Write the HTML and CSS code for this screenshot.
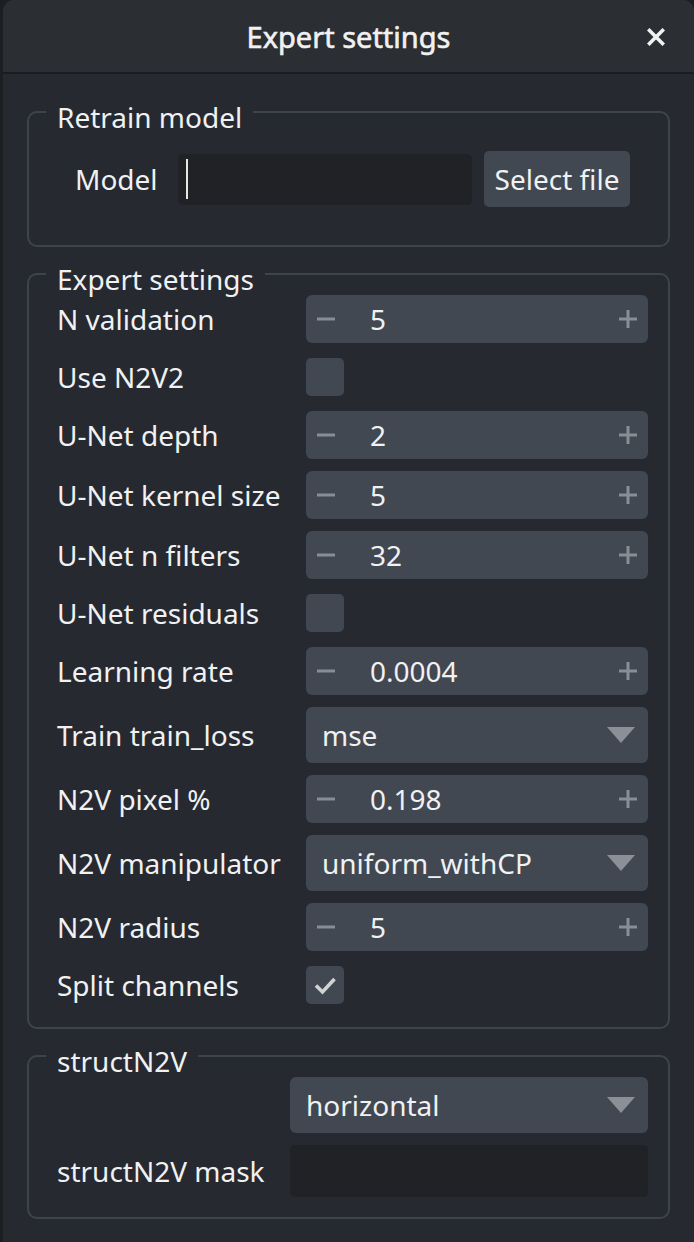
FILE: index.html
```html
<!DOCTYPE html>
<html>
<head>
<meta charset="utf-8">
<title>Expert settings</title>
<link rel="stylesheet" href="styles.css">
</head>
<body>
<div class="window">
  <div class="titlebar">
    <span class="title">Expert settings</span>
    <span class="close" aria-label="close">
      <svg width="18" height="18" viewBox="0 0 18 18"><path d="M2.5 2.5 L15.5 15.5 M15.5 2.5 L2.5 15.5" stroke="#f0f1f2" stroke-width="3.6" stroke-linecap="square" fill="none"/></svg>
    </span>
  </div>
  <div class="content">
    <fieldset class="group g-retrain">
      <legend>Retrain model</legend>
      <div class="model-row">
        <span class="label">Model</span>
        <div class="lineedit model-input"><span class="caret"></span></div>
        <button class="btn">Select file</button>
      </div>
    </fieldset>

    <fieldset class="group g-expert">
      <legend>Expert settings</legend>
      <div class="form">
        <span class="label">N validation</span>
        <div class="spin"><svg class="minus" viewBox="0 0 18 18"><path d="M0 9H18"/></svg><span class="val">5</span><svg class="plus" viewBox="0 0 18 18"><path d="M0 9H18M9 0V18"/></svg></div>

        <span class="label">Use N2V2</span>
        <div class="cbrow"><span class="check"></span></div>

        <span class="label">U-Net depth</span>
        <div class="spin"><svg class="minus" viewBox="0 0 18 18"><path d="M0 9H18"/></svg><span class="val">2</span><svg class="plus" viewBox="0 0 18 18"><path d="M0 9H18M9 0V18"/></svg></div>

        <span class="label">U-Net kernel size</span>
        <div class="spin"><svg class="minus" viewBox="0 0 18 18"><path d="M0 9H18"/></svg><span class="val">5</span><svg class="plus" viewBox="0 0 18 18"><path d="M0 9H18M9 0V18"/></svg></div>

        <span class="label">U-Net n filters</span>
        <div class="spin"><svg class="minus" viewBox="0 0 18 18"><path d="M0 9H18"/></svg><span class="val">32</span><svg class="plus" viewBox="0 0 18 18"><path d="M0 9H18M9 0V18"/></svg></div>

        <span class="label">U-Net residuals</span>
        <div class="cbrow"><span class="check"></span></div>

        <span class="label">Learning rate</span>
        <div class="spin"><svg class="minus" viewBox="0 0 18 18"><path d="M0 9H18"/></svg><span class="val">0.0004</span><svg class="plus" viewBox="0 0 18 18"><path d="M0 9H18M9 0V18"/></svg></div>

        <span class="label">Train train_loss</span>
        <div class="combo"><span class="val">mse</span><svg class="arrow" viewBox="0 0 28 16"><path d="M0 0H28L14 16Z"/></svg></div>

        <span class="label">N2V pixel %</span>
        <div class="spin"><svg class="minus" viewBox="0 0 18 18"><path d="M0 9H18"/></svg><span class="val">0.198</span><svg class="plus" viewBox="0 0 18 18"><path d="M0 9H18M9 0V18"/></svg></div>

        <span class="label">N2V manipulator</span>
        <div class="combo"><span class="val">uniform_withCP</span><svg class="arrow" viewBox="0 0 28 16"><path d="M0 0H28L14 16Z"/></svg></div>

        <span class="label">N2V radius</span>
        <div class="spin"><svg class="minus" viewBox="0 0 18 18"><path d="M0 9H18"/></svg><span class="val">5</span><svg class="plus" viewBox="0 0 18 18"><path d="M0 9H18M9 0V18"/></svg></div>

        <span class="label">Split channels</span>
        <div class="cbrow"><span class="check checked"><svg viewBox="0 0 38 38"><path d="M10 19.5L16.5 26L28.5 13" /></svg></span></div>
      </div>
    </fieldset>

    <fieldset class="group g-struct">
      <legend>structN2V</legend>
      <div class="form form-struct">
        <span class="label"></span>
        <div class="combo combo-struct"><span class="val">horizontal</span><svg class="arrow" viewBox="0 0 28 16"><path d="M0 0H28L14 16Z"/></svg></div>

        <span class="label">structN2V mask</span>
        <div class="lineedit mask-input"></div>
      </div>
    </fieldset>
  </div>
</div>
</body>
</html>
```

FILE: styles.css
```css
* { box-sizing: border-box; }

html, body {
  margin: 0;
  padding: 0;
  background: #1c1e21;
}

body {
  font-family: "Noto Sans", "DejaVu Sans", sans-serif;
  font-size: 28px;
  color: #f0f1f2;
  height: 1242px;
  overflow: hidden;
}

.window {
  margin-left: 3px;
  height: 1242px;
  background: #262930;
  border-radius: 11px 11px 0 0;
  overflow: hidden;
}

.titlebar {
  height: 74px;
  background: #2b2e32;
  border-bottom: 2px solid #1a1c1e;
  display: grid;
  grid-template-columns: 1fr auto 1fr;
  align-items: center;
}

.title {
  grid-column: 2;
  font-size: 29px;
  line-height: 32px;
  -webkit-text-stroke: 0.6px #f0f1f2;
  padding-top: 2px;
}

.close {
  grid-column: 3;
  justify-self: end;
  margin-right: 29px;
  display: flex;
  padding-top: 2px;
}

.content {
  padding: 17px 24px 0 24px;
  display: flex;
  flex-direction: column;
  gap: 6px;
}

.group {
  margin: 0;
  border: 2px solid #3e444c;
  border-radius: 10px;
  min-width: 0;
}

.group legend {
  font-size: 28px;
  line-height: 32px;
  padding: 10px 11px 0 11px;
  height: 42px;
}

.g-retrain {
  padding: 18px 20px 38px 46px;
}
.g-retrain legend {
  margin-left: -29px;
}

.g-expert, .g-struct {
  padding: 0 20px 20px 28px;
}
.g-expert legend, .g-struct legend {
  margin-left: -11px;
}

.label {
  line-height: 32px;
  white-space: nowrap;
}

.model-row {
  display: flex;
  align-items: center;
  height: 56px;
}

.model-row .label {
  width: 103px;
  flex: none;
}

.lineedit {
  background: #202226;
  border-radius: 5px;
}

.model-input {
  width: 294px;
  height: 51px;
  display: flex;
  align-items: center;
  padding-left: 8px;
}

.caret {
  width: 2px;
  height: 40px;
  background: #e8e6e0;
}

.btn {
  margin-left: 12px;
  width: 146px;
  height: 56px;
  border: none;
  border-radius: 5px;
  background: #414851;
  color: #f0f1f2;
  font-family: inherit;
  font-size: 28px;
  padding: 0;
}

.form {
  display: grid;
  grid-template-columns: 249px 1fr;
  row-gap: 12px;
  align-items: center;
}

.form-struct {
  grid-template-columns: 233px 1fr;
}

.spin {
  height: 48px;
  background: #414851;
  border-radius: 6px;
  display: flex;
  align-items: center;
  padding: 0 11px;
}

.spin svg {
  width: 18px;
  height: 18px;
  flex: none;
}

.spin svg path {
  stroke: #878e95;
  stroke-width: 3;
  fill: none;
}

.spin .val {
  margin-left: 35px;
  line-height: 32px;
}

.spin .plus {
  margin-left: auto;
}

.combo {
  height: 56px;
  background: #414851;
  border-radius: 6px;
  display: flex;
  align-items: center;
  padding: 0 13px 0 16px;
}

.combo .val {
  line-height: 32px;
}

.combo .arrow {
  margin-left: auto;
  width: 28px;
  height: 16px;
}

.combo .arrow path {
  fill: #8b9097;
}

.cbrow {
  height: 44px;
  display: flex;
  align-items: center;
}

.check {
  width: 38px;
  height: 38px;
  background: #414851;
  border-radius: 5px;
  display: flex;
}

.check svg {
  width: 38px;
  height: 38px;
}

.check svg path {
  stroke: #d1d2d4;
  stroke-width: 3.6;
  fill: none;
}

.mask-input {
  height: 52px;
}
```
